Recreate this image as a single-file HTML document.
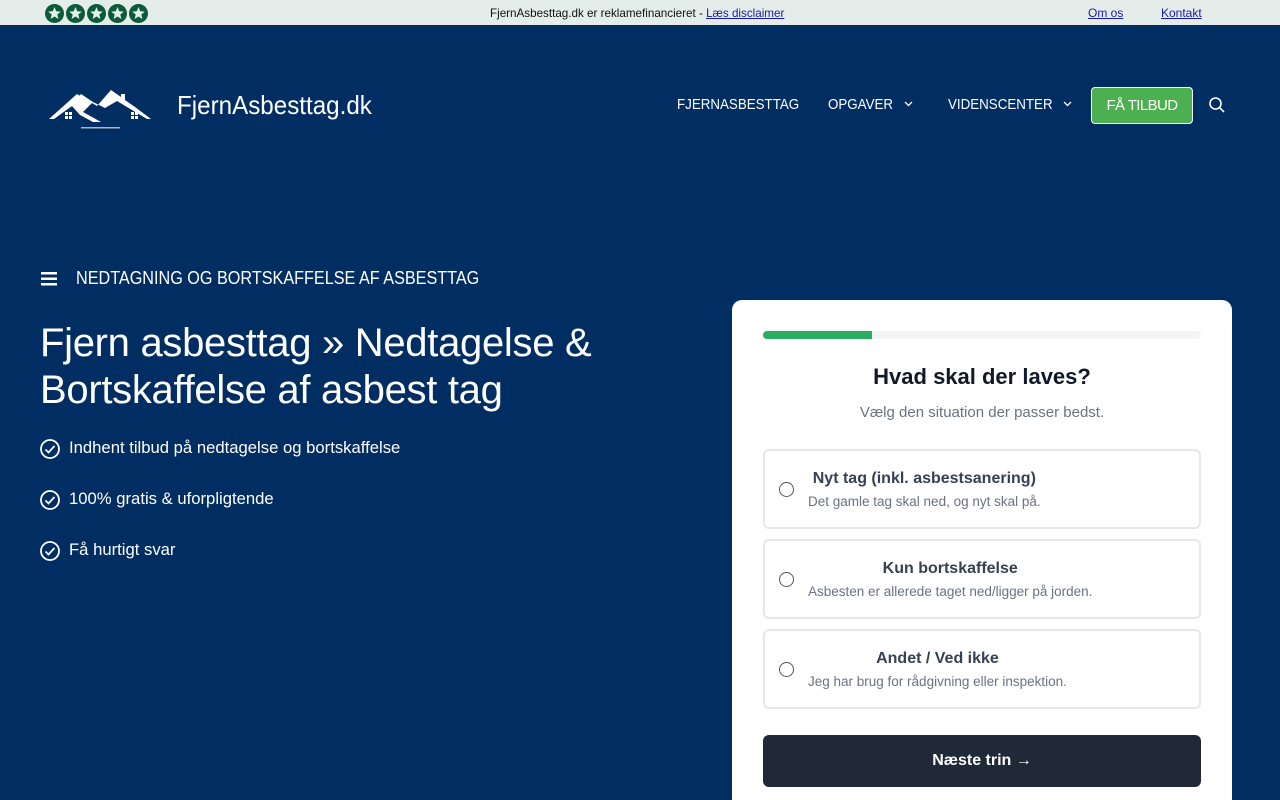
<!DOCTYPE html>
<html><head><meta charset="utf-8"><style>
*{margin:0;padding:0;box-sizing:border-box}
html,body{width:1280px;height:800px;overflow:hidden}
body{background:#002d62;font-family:"Liberation Sans",sans-serif;color:#fff;position:relative}
.top{position:absolute;left:0;top:0;width:1280px;height:25px;background:#e4edea;color:#111;font-size:12px}
.top a{color:#1a1aa6;text-decoration:underline}
.a{position:absolute}
.nav{font-size:15px;top:96px;transform:scaleX(.89);transform-origin:0 0;white-space:nowrap}
.card{position:absolute;left:732px;top:300px;width:500px;height:500px;background:#fff;border-radius:10px 10px 0 0}
.opt{position:absolute;left:31px;width:438px;height:80px;border:2px solid #e5e7eb;border-radius:6px;color:#374151}
.opt .r{position:absolute;left:14px;top:31px;width:15px;height:15px;border:1.5px solid #555;border-radius:50%}
.opt .t{position:absolute;left:43px;top:18px;font-size:16px;font-weight:bold;text-align:center}
.opt .d{font-size:13.5px;font-weight:normal;color:#6b7280;margin-top:6px;white-space:nowrap}
.li{position:absolute;left:40px;font-size:17px}
.li svg{position:absolute;left:0;top:2px}
.li span{position:absolute;left:29px;top:1px;white-space:nowrap;transform:scaleX(.98);transform-origin:0 0}
</style></head><body>
<div class="top">
<svg class="a" style="left:45px;top:4px" width="104" height="19">
<g fill="#0b5b3a"><circle cx="9.5" cy="9.5" r="9.5"/><circle cx="30.5" cy="9.5" r="9.5"/><circle cx="51.5" cy="9.5" r="9.5"/><circle cx="72.5" cy="9.5" r="9.5"/><circle cx="93.5" cy="9.5" r="9.5"/></g>
<g fill="#e4f3ea"><path id="s" d="M9.5 3l1.7 4.3 4.6.3-3.5 2.9 1.1 4.5-3.9-2.5-3.9 2.5 1.1-4.5-3.5-2.9 4.6-.3z"/><use href="#s" x="21"/><use href="#s" x="42"/><use href="#s" x="63"/><use href="#s" x="84"/></g></svg>
<div class="a" style="left:490px;top:6px;transform:scaleX(.97);transform-origin:0 0;white-space:nowrap">FjernAsbesttag.dk er reklamefinancieret - <a>Læs disclaimer</a></div>
<div class="a" style="left:1088px;top:6px"><a>Om os</a></div>
<div class="a" style="left:1161px;top:6px"><a>Kontakt</a></div>
</div>
<svg class="a" style="left:47px;top:88px" width="108" height="44">
<g fill="#fff"><path d="M2 31L30 6l20 12 14-16 10 7v-3h4v6l10 7 16 12h-4L70 13 58 20 46 14 36 24l18 10h-8L33 27l-8-9-18 13z"/><path d="M24 18l10-12 12 8-10 9z"/>
<rect x="18" y="24" width="3" height="3"/><rect x="22" y="24" width="3" height="3"/><rect x="18" y="28" width="3" height="3"/><rect x="22" y="28" width="3" height="3"/>
<rect x="84" y="24" width="3" height="3"/><rect x="88" y="24" width="3" height="3"/><rect x="84" y="28" width="3" height="3"/><rect x="88" y="28" width="3" height="3"/></g>
<rect x="34" y="39" width="39" height="1.5" fill="#aab4c8"/></svg>
<div class="a" style="left:177px;top:90px;font-size:26px;transform:scaleX(.93);transform-origin:0 0;white-space:nowrap">FjernAsbesttag.dk</div>
<div class="a nav" style="left:677px">FJERNASBESTTAG</div>
<div class="a nav" style="left:828px">OPGAVER</div>
<svg class="a" style="left:904px;top:101px" width="9" height="6" fill="none" stroke="#fff" stroke-width="1.3"><path d="M1 1l3.5 3.5L8 1"/></svg>
<div class="a nav" style="left:948px">VIDENSCENTER</div>
<svg class="a" style="left:1063px;top:101px" width="9" height="6" fill="none" stroke="#fff" stroke-width="1.3"><path d="M1 1l3.5 3.5L8 1"/></svg>
<div class="a" style="left:1091px;top:87px;width:102px;height:37px;background:#4caf50;border:1px solid #fff;border-radius:4px;font-size:15px;text-align:center;line-height:35px;letter-spacing:-.6px">FÅ TILBUD</div>
<svg class="a" style="left:1208px;top:96px" width="18" height="18" fill="none" stroke="#fff" stroke-width="1.6"><circle cx="7.5" cy="7.5" r="5.5"/><path d="M11.5 11.5l4.5 4.5"/></svg>
<svg class="a" style="left:41px;top:271px" width="16" height="15" fill="#fff"><rect y="1" width="16" height="2.5"/><rect y="6.5" width="16" height="2.5"/><rect y="12" width="16" height="2.5"/></svg>
<div class="a" style="left:76px;top:268px;font-size:18px;transform:scaleX(.9);transform-origin:0 0;white-space:nowrap">NEDTAGNING OG BORTSKAFFELSE AF ASBESTTAG</div>
<div class="a" style="left:40px;top:320px;font-size:40px;line-height:47px;letter-spacing:-.3px">Fjern asbesttag » Nedtagelse &amp;<br>Bortskaffelse af asbest tag</div>
<div class="li" style="top:437px"><svg width="20" height="20" fill="none" stroke="#fff" stroke-width="1.8"><circle cx="10" cy="10" r="9"/><path d="M5.5 10.5l3 3 6-6.5"/></svg><span>Indhent tilbud på nedtagelse og bortskaffelse</span></div>
<div class="li" style="top:488px"><svg width="20" height="20" fill="none" stroke="#fff" stroke-width="1.8"><circle cx="10" cy="10" r="9"/><path d="M5.5 10.5l3 3 6-6.5"/></svg><span>100% gratis &amp; uforpligtende</span></div>
<div class="li" style="top:539px"><svg width="20" height="20" fill="none" stroke="#fff" stroke-width="1.8"><circle cx="10" cy="10" r="9"/><path d="M5.5 10.5l3 3 6-6.5"/></svg><span>Få hurtigt svar</span></div>
<div class="card">
<div class="a" style="left:31px;top:31px;width:438px;height:8px;background:#f3f4f6;border-radius:4px"><div style="width:109px;height:8px;background:#27ae60;border-radius:4px 0 0 4px"></div></div>
<div class="a" style="left:0;top:64px;width:500px;text-align:center;font-size:22px;font-weight:bold;color:#111827">Hvad skal der laves?</div>
<div class="a" style="left:0;top:104px;width:500px;text-align:center;font-size:15px;color:#6b7280">Vælg den situation der passer bedst.</div>
<div class="opt" style="top:149px"><div class="r"></div><div class="t" style="top:19px">Nyt tag (inkl. asbestsanering)<div class="d">Det gamle tag skal ned, og nyt skal på.</div></div></div>
<div class="opt" style="top:239px"><div class="r"></div><div class="t" style="top:19px">Kun bortskaffelse<div class="d">Asbesten er allerede taget ned/ligger på jorden.</div></div></div>
<div class="opt" style="top:329px"><div class="r"></div><div class="t" style="top:19px">Andet / Ved ikke<div class="d">Jeg har brug for rådgivning eller inspektion.</div></div></div>
<div class="a" style="left:31px;top:435px;width:438px;height:52px;background:#1f2937;border-radius:6px;text-align:center;line-height:52px;font-size:16px;font-weight:bold">Næste trin →</div>
</div>
</body></html>
